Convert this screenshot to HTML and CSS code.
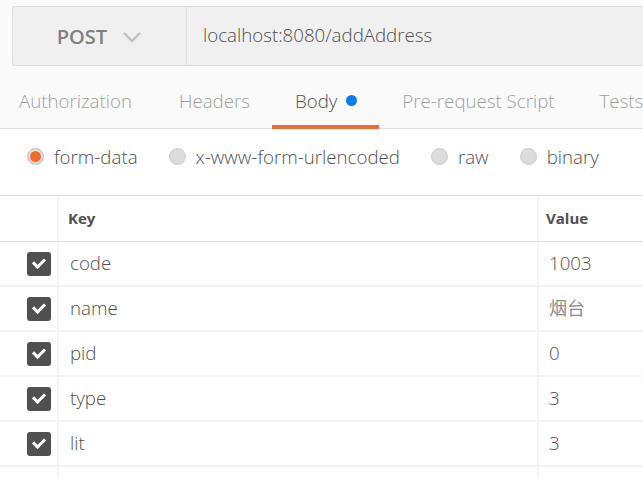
FILE: index.html
```html
<!DOCTYPE html>
<html lang="en">

<head>
  <meta charset="utf-8">
  <title>POST localhost:8080/addAddress</title>
  <link rel="stylesheet" href="styles.css">
</head>

<body>
  <div class="top">
    <div class="request-bar">
      <div class="method">
        <span>POST</span>
        <svg class="chevron" width="20" height="12" viewBox="0 0 20 12">
          <path d="M2 2 L10 10 L18 2" fill="none" stroke="#c0c0c0" stroke-width="2.4" />
        </svg>
      </div>
      <div class="url">localhost:8080/addAddress</div>
    </div>

    <nav class="tabs">
      <div class="tab first">Authorization</div>
      <div class="tab">Headers</div>
      <div class="tab active">Body <span class="dot"></span></div>
      <div class="tab">Pre-request Script</div>
      <div class="tab">Tests</div>
    </nav>
  </div>

  <div class="body-types">
    <label class="radio"><span class="circle checked"></span>form-data</label>
    <label class="radio"><span class="circle"></span>x-www-form-urlencoded</label>
    <label class="radio"><span class="circle"></span>raw</label>
    <label class="radio"><span class="circle"></span>binary</label>
  </div>

  <div class="params">
    <div class="row head">
      <div class="cell check"></div>
      <div class="cell key">Key</div>
      <div class="cell value">Value</div>
    </div>
    <div class="row">
      <div class="cell check"><span class="box"></span></div>
      <div class="cell key">code</div>
      <div class="cell value">1003</div>
    </div>
    <div class="row">
      <div class="cell check"><span class="box"></span></div>
      <div class="cell key">name</div>
      <div class="cell value cjk">烟台</div>
    </div>
    <div class="row">
      <div class="cell check"><span class="box"></span></div>
      <div class="cell key">pid</div>
      <div class="cell value">0</div>
    </div>
    <div class="row">
      <div class="cell check"><span class="box"></span></div>
      <div class="cell key">type</div>
      <div class="cell value">3</div>
    </div>
    <div class="row">
      <div class="cell check"><span class="box"></span></div>
      <div class="cell key">lit</div>
      <div class="cell value">3</div>
    </div>
    <div class="row">
      <div class="cell check"></div>
      <div class="cell key"></div>
      <div class="cell value"></div>
    </div>
  </div>
</body>

</html>
```

FILE: styles.css
```css
body,
html {
  margin: 0;
  padding: 0;
  height: 100%;
  overflow: hidden;
  font-family: "Open Sans", "Noto Sans CJK SC", sans-serif;
  font-weight: 300;
  background-color: #ffffff;
  color: #505050;
}

.top {
  background-color: #fafafa;
  padding-top: 6px;
}

.request-bar {
  display: flex;
  height: 58px;
  margin-left: 12px;
  background-color: #f0f0f0;
  border: 1px solid #dcdcdc;
  border-right: none;
  border-radius: 3px 0 0 3px;
}

.method {
  width: 173px;
  flex-shrink: 0;
  display: flex;
  align-items: center;
  justify-content: center;
  gap: 15px;
  border-right: 1px solid #dcdcdc;
  font-size: 20px;
  font-weight: 600;
  color: #808080;
}

.chevron {
  margin-top: 1px;
}

.url {
  display: flex;
  align-items: center;
  padding: 0 0 3px 16px;
  font-size: 18.7px;
  color: #505050;
}

.tabs {
  display: flex;
  height: 62px;
  border-bottom: 1px solid #e0e0e0;
  white-space: nowrap;
}

.tab {
  flex-shrink: 0;
  display: flex;
  align-items: center;
  padding: 10px 22px 0 23px;
  font-size: 18.7px;
  color: #a0a0a0;
  border-bottom: 4px solid transparent;
  margin-bottom: -1px;
}

.tab.first {
  padding-left: 19px;
  padding-right: 24px;
}

.tab.active {
  color: #505050;
  border-bottom-color: #f26b2a;
}

.dot {
  display: inline-block;
  width: 11px;
  height: 11px;
  margin-left: 9px;
  border-radius: 50%;
  background-color: #097bed;
}

.body-types {
  display: flex;
  align-items: center;
  height: 66px;
  padding: 0 0 11px 27px;
  box-sizing: border-box;
  gap: 31px;
  font-size: 18.7px;
  white-space: nowrap;
}

.radio {
  display: flex;
  align-items: center;
  gap: 10px;
}

.circle {
  width: 15px;
  height: 15px;
  border-radius: 50%;
  background-color: #dcdcdc;
  border: 1px solid #cccccc;
}

.circle.checked {
  background-color: #f26b2a;
  box-shadow: inset 0 0 0 2px #e6e6e6;
}

.params {
  border-top: 1px solid #e0e0e0;
}

.row {
  display: grid;
  grid-template-columns: 57px 480px 1fr;
  height: 45px;
  box-sizing: border-box;
  border-bottom: 2px solid #f4f4f4;
}

.row.head {
  height: 46px;
  border-bottom: 1px solid #e0e0e0;
}

.cell {
  display: flex;
  align-items: center;
  font-size: 18.7px;
}

.cell.key,
.cell.value {
  border-left: 2px solid #f4f4f4;
  padding: 0 0 3px 11px;
}

.cell.value {
  padding-left: 10px;
}

.cell.cjk {
  color: #8c8c8c;
  font-weight: 400;
  font-size: 18px;
}

.row.head .cell {
  font-size: 15px;
  font-weight: 700;
  padding: 0 0 1px 9px;
}

.row.head .cell.value {
  padding-left: 7px;
}

.cell.check {
  justify-content: flex-end;
  padding-right: 6px;
}

.box {
  width: 24px;
  height: 24px;
  border-radius: 3px;
  background-color: #505050;
  display: flex;
  align-items: center;
  justify-content: center;
}

.box::after {
  content: "";
  width: 9px;
  height: 5px;
  border-left: 3px solid #ffffff;
  border-bottom: 3px solid #ffffff;
  transform: rotate(-45deg);
  margin-top: -3px;
}
```
